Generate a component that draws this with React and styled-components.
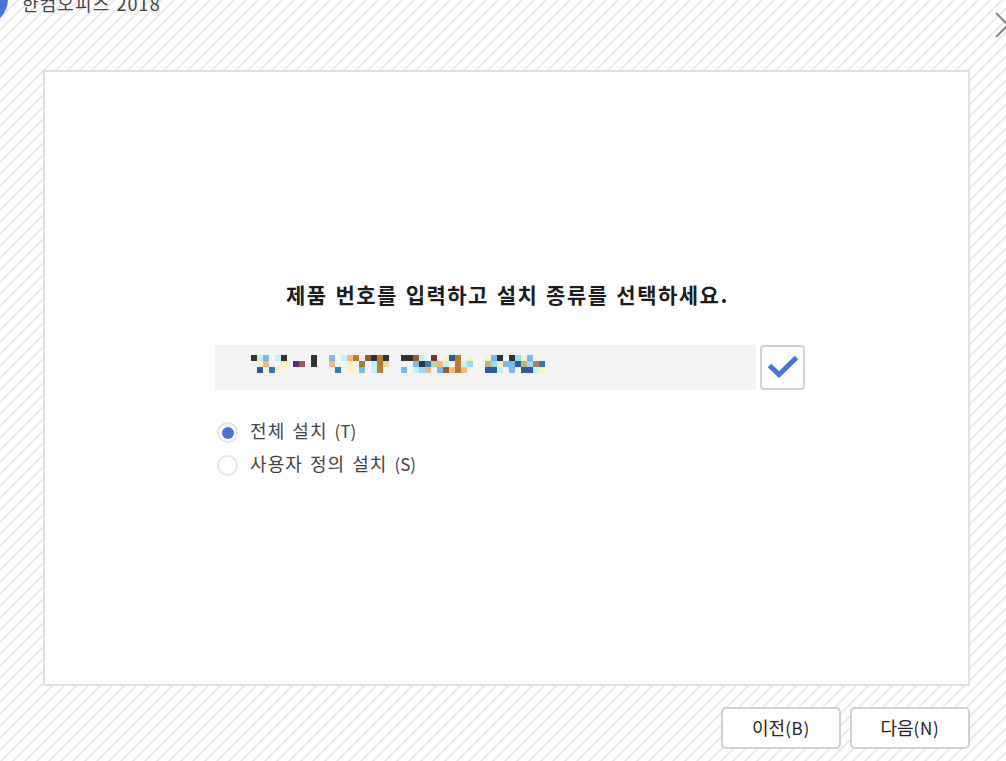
import React, { useState } from "react"
import styled, { createGlobalStyle } from "styled-components"

const installTypes = [
  { value: "full", label: "전체 설치", shortcut: "(T)" },
  { value: "custom", label: "사용자 정의 설치", shortcut: "(S)" },
]

// masked product number, one letter per 6px cell
const maskRows = [
  "kcb.ck....k..b.cog.rkgk..kkrc.m.yng.y..ybk.klyb..",
  ".yo..y.pq.k..o..y.v.cgf....bksaoc.gcl..hlybbnhlus",
  ".n.sy.........s.y.b.cg...b.clo.brogo...nnc.b.nncy",
]

const maskColors = {
  k: "#303234",
  c: "#bdf5f5",
  b: "#78b8fa",
  o: "#fab878",
  y: "#f6f5bd",
  g: "#b87b32",
  r: "#9c5935",
  m: "#782e35",
  n: "#3059a0",
  p: "#55307b",
  q: "#9c5957",
  v: "#9c7b32",
  f: "#f8d79b",
  s: "#327bb8",
  a: "#b9dba0",
  l: "#99dbf8",
  h: "#b9b978",
  u: "#bd7957",
}

const ProductNumber = () => (
  <NumberField>
    <Mask>
      {maskRows
        .join("")
        .split("")
        .map((cell, i) => (
          <MaskCell key={i} $color={maskColors[cell]} />
        ))}
    </Mask>
  </NumberField>
)

const App = () => {
  const [type, setType] = useState("full")

  return (
    <Window>
      <GlobalStyle />
      <TitleBar>
        <Logo />
        <Title>한컴오피스 2018</Title>
        <Close viewBox="0 0 24 24">
          <path d="M0 0 L24 24 M24 0 L0 24" />
        </Close>
      </TitleBar>

      <Panel>
        <Heading>제품 번호를 입력하고 설치 종류를 선택하세요.</Heading>
        <NumberRow>
          <ProductNumber />
          <Confirm>
            <svg width="32" height="24" viewBox="0 0 32 24">
              <path d="M2.5 10.5 L12 19.5 L29.5 2.5" />
            </svg>
          </Confirm>
        </NumberRow>
        <Options>
          {installTypes.map(({ value, label, shortcut }) => (
            <Option key={value} onClick={() => setType(value)}>
              <Radio>{type === value && <Dot />}</Radio>
              <span>
                {label} <Key>{shortcut}</Key>
              </span>
            </Option>
          ))}
        </Options>
      </Panel>

      <Footer>
        <Button>
          이전<Key $wide>(B)</Key>
        </Button>
        <Button>
          다음<Key $wide>(N)</Key>
        </Button>
      </Footer>
    </Window>
  )
}

const GlobalStyle = createGlobalStyle`
  * {
    box-sizing: border-box;
  }
  body {
    margin: 0;
    overflow: hidden;
    font-family: "Noto Sans CJK KR", sans-serif;
  }
`

const Window = styled.div`
  display: flex;
  flex-direction: column;
  width: 1006px;
  height: 761px;
  overflow: hidden;
  background: repeating-linear-gradient(
    135deg,
    #fff 0,
    #fff 2.8px,
    #e8e8e8 4px,
    #e8e8e8 4.6px,
    #fff 5.8px,
    #fff 8.4853px
  );
`

const TitleBar = styled.header`
  display: flex;
  flex: none;
  align-items: flex-start;
  height: 70px;
`

const Logo = styled.div`
  flex: none;
  width: 54px;
  height: 54px;
  margin: -28px 0 0 -46px;
  border-radius: 50%;
  background: #4874d9;
`

const Title = styled.div`
  flex: 1;
  margin: -10px 0 0 14px;
  color: #444;
  font-size: 18px;
  letter-spacing: 1.1px;
  word-spacing: 1px;
  line-height: 26px;
`

const Close = styled.svg`
  flex: none;
  width: 24px;
  height: 24px;
  margin: 13px -14px 0 0;
  overflow: visible;
  stroke: #888;
  stroke-width: 2;
`

const Panel = styled.main`
  display: flex;
  flex: none;
  flex-direction: column;
  width: 927px;
  height: 616px;
  margin-left: 43px;
  padding: 207px 0 0 170px;
  border: 2px solid #dfdfdf;
  background: #fff;
`

const Heading = styled.h1`
  width: 443px;
  margin: 0 0 0 71px;
  color: #1c1c1c;
  font-size: 21px;
  font-weight: 700;
  letter-spacing: 1.5px;
  word-spacing: 1.5px;
  line-height: 30px;
  white-space: nowrap;
`

const NumberRow = styled.div`
  display: flex;
  gap: 4px;
  margin-top: 36px;
`

const NumberField = styled.div`
  width: 541px;
  height: 45px;
  padding: 10px 0 0 36px;
  background: #f4f4f4;
`

const Mask = styled.div`
  display: grid;
  grid-template-columns: repeat(49, 6px);
  grid-auto-rows: 6px;
`

const MaskCell = styled.span`
  background: ${({ $color }) => $color || "transparent"};
`

const Confirm = styled.button`
  display: flex;
  align-items: center;
  justify-content: center;
  width: 45px;
  height: 45px;
  padding: 0 0 2px;
  border: 2px solid #d2d2d2;
  border-radius: 4px;
  background: #fff;

  path {
    fill: none;
    stroke: #4874d9;
    stroke-width: 5;
  }
`

const Options = styled.div`
  display: flex;
  flex-direction: column;
  margin-top: 24px;
`

const Option = styled.div`
  display: flex;
  align-items: center;
  gap: 12px;
  height: 33px;
  padding-left: 2px;
  color: #444;
  font-size: 18px;
  letter-spacing: 1.1px;
  word-spacing: 1.8px;
  line-height: 33px;
`

const Radio = styled.span`
  display: flex;
  align-items: center;
  justify-content: center;
  width: 21px;
  height: 21px;
  margin-top: 4px;
  border: 2px solid #e6e6e6;
  border-radius: 50%;
  background: #fff;
`

const Dot = styled.span`
  width: 12px;
  height: 12px;
  border-radius: 50%;
  background: #4874d9;
`

const Footer = styled.footer`
  display: flex;
  gap: 9px;
  margin: 21px 0 0 721px;
`

const Button = styled.button`
  width: 120px;
  height: 42px;
  padding: 0 0 3px;
  border: 2px solid #d0d0d0;
  border-radius: 5px;
  background: #fff;
  color: #222;
  font-family: inherit;
  font-size: 18px;
`

const Key = styled.span`
  font-size: 17px;
  letter-spacing: ${({ $wide }) => ($wide ? "0.7px" : "0")};
`

export default App
